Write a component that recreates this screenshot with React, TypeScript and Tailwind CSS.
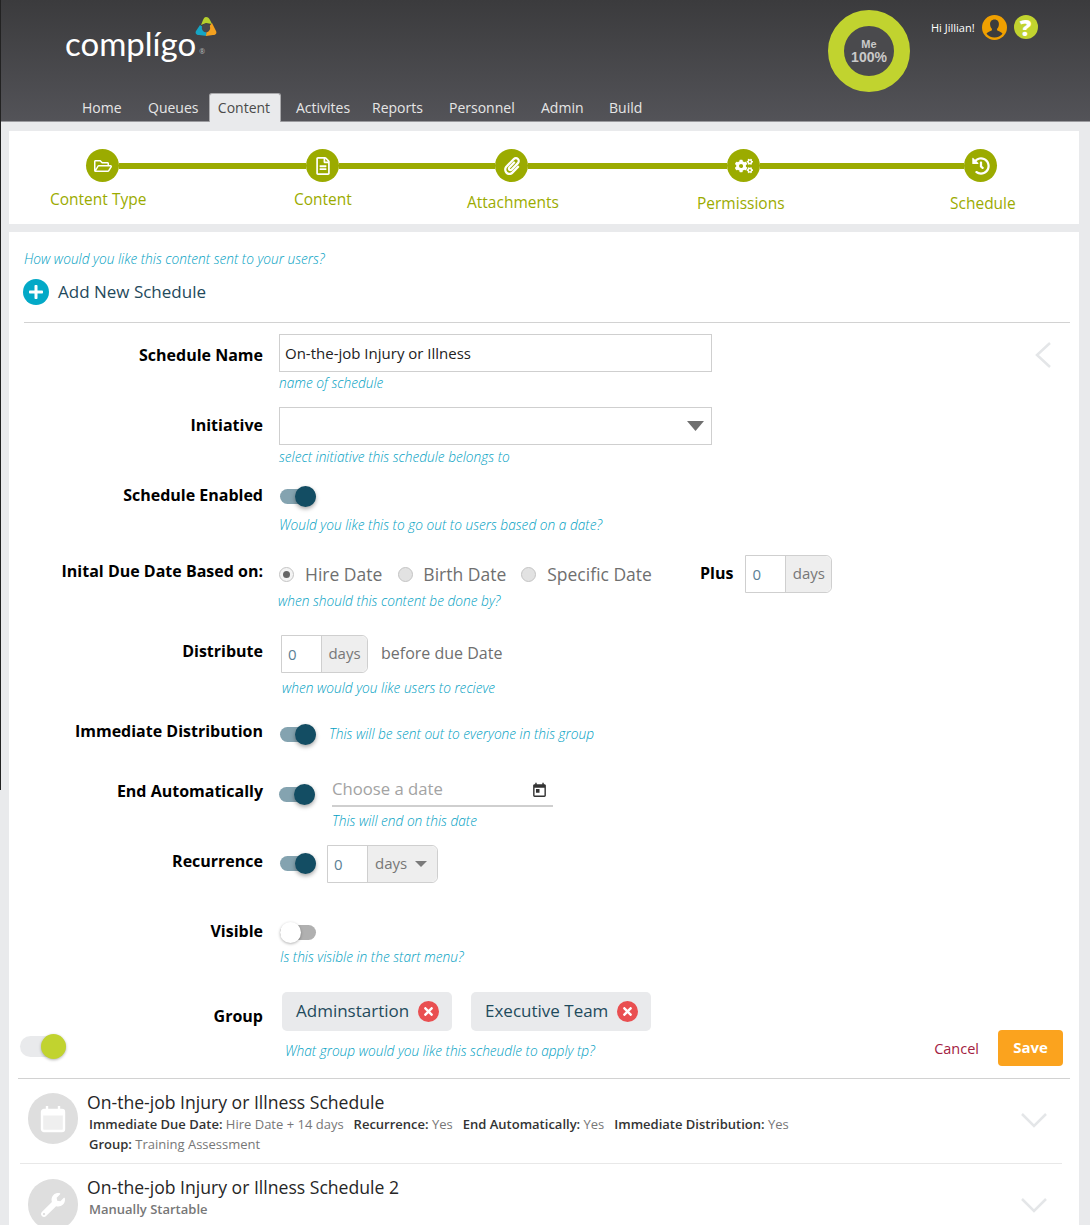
import React from "react";
import { FaRegFolderOpen, FaRegFileAlt, FaPaperclip, FaCogs, FaHistory, FaPlus, FaTimes, FaWrench } from "react-icons/fa";
import { MdToday } from "react-icons/md";

function Hint({ children, className = "" }: { children: React.ReactNode; className?: string }) {
  return <div className={"text-[13.7px] leading-5 italic font-light text-[#00a0c2] whitespace-nowrap " + className}>{children}</div>;
}

function Toggle({ on = true }: { on?: boolean }) {
  return on ? (
    <div className="flex h-[15px] w-9 items-center justify-end rounded-full bg-[#84a3b0]">
      <div className="h-[21px] w-[21px] shrink-0 rounded-full bg-[#134d63] shadow-[0_2px_4px_rgba(0,0,0,0.35)]" />
    </div>
  ) : (
    <div className="flex h-[15px] w-9 items-center justify-start rounded-full bg-[#b0b0b0]">
      <div className="h-[21px] w-[21px] shrink-0 rounded-full bg-white shadow-[0_1px_3px_rgba(0,0,0,0.3)]" />
    </div>
  );
}

function Label({ children, className = "" }: { children: React.ReactNode; className?: string }) {
  return <div className={"text-right text-[16px] leading-[22px] font-bold text-black whitespace-nowrap " + className}>{children}</div>;
}

function Radio({ checked = false }: { checked?: boolean }) {
  return (
    <span className={"flex h-[15px] w-[15px] items-center justify-center rounded-full border border-[#c4c4c4] " + (checked ? "bg-[#f4f4f4]" : "bg-[#e2e2e2]")}>
      {checked && <span className="h-[7px] w-[7px] rounded-full bg-[#666]" />}
    </span>
  );
}

function Days({ className = "" }: { className?: string }) {
  return (
    <div className={"flex h-[38px] w-[87px] rounded-r-[6px] border border-[#cfcfcf] text-[15px] " + className}>
      <div className="flex w-[39px] items-center pl-[6px] text-[#5b7f95]">0</div>
      <div className="flex flex-1 items-center justify-center rounded-r-[6px] border-l border-[#cfcfcf] bg-[#eeeeee] pb-[2px] text-[#777]">days</div>
    </div>
  );
}

function Chip({ text, className = "" }: { text: string; className?: string }) {
  return (
    <div className={"flex h-[39px] items-center rounded-[5px] bg-[#e9eaec] text-[17px] text-[#1f4a5c] " + className}>
      <span className="pb-[2px]">{text}</span>
      <span className="ml-[9px] flex h-[21px] w-[21px] items-center justify-center rounded-full bg-[#e94f51] text-[13px] text-white">
        <FaTimes />
      </span>
    </div>
  );
}

function Step({ icon, className = "" }: { icon: React.ReactNode; className?: string }) {
  return (
    <div className={"flex h-[33px] w-[33px] shrink-0 items-center justify-center rounded-full bg-[#9bab00] text-[18px] text-white " + className}>
      {icon}
    </div>
  );
}

function Bar() {
  return <div className="h-[6px] flex-1 bg-[#9bab00]" />;
}

function Chevron() {
  return (
    <svg width="28" height="16" viewBox="0 0 28 16" fill="none" stroke="#e4e6e8" strokeWidth="2.5">
      <path d="M2 2 L14 14 L26 2" />
    </svg>
  );
}

function Meta({ k, v, className = "" }: { k: string; v: string; className?: string }) {
  return (
    <span className={"whitespace-nowrap " + className}>
      <span className="font-semibold text-[#333]">{k}</span> <span className="text-[#777]">{v}</span>
    </span>
  );
}

export default function App() {
  return (
    <div className="relative h-[1225px] w-[1090px] overflow-hidden bg-[#e9eaec] font-['Open_Sans',sans-serif]">
      <div className="absolute left-0 top-0 h-[790px] w-px bg-[#222]" />
      <header className="flex h-[122px] flex-col border-b border-[#9a9a9e] bg-gradient-to-b from-[#3b3b3d] to-[#535358]">
        <div className="flex h-[93px]">
          <div className="ml-[65px] mt-[17px] flex h-[45px] w-[153px] items-start">
            <div className="mt-[9px] font-['Lato',sans-serif] text-[33px] leading-[34px] font-normal text-white">complígo</div>
            <div className="flex flex-col items-start">
              <svg width="22" height="20" viewBox="0 0 22 20" className="-ml-[1px]">
                <path d="M11 0 C13 0 14 1 15 3 L17 7 L11 6 L6 8 L8 3 C9 1 9.5 0 11 0Z" fill="#b5cf2d" />
                <path d="M5 8 L11 12 L12 19 L4 18 C1 18 0 16 1 14Z" fill="#16a5c4" />
                <path d="M17 6 L21 14 C22 16 21 18 18 18 L11 19 L12 12Z" fill="#f4a11f" />
                <circle cx="11" cy="11" r="4.2" fill="#47474a" />
              </svg>
              <span className="ml-[3px] mt-[11px] text-[7px] leading-[8px] text-[#bbb]">®</span>
            </div>
          </div>
          <div className="ml-[610px] mt-[10px] flex h-[82px] w-[82px] shrink-0 flex-col items-center justify-center rounded-full border-[16px] border-[#c1d32f] bg-[#4a4a4d] font-['Liberation_Sans',sans-serif] font-bold text-[#c9c9c9]">
            <span className="text-[11px] leading-[12px]">Me</span>
            <span className="text-[14px] leading-[14px]">100%</span>
          </div>
          <div className="ml-[21px] mt-[15px] flex h-[26px] items-center">
            <span className="text-[11px] font-['Open_Sans',sans-serif] text-white">Hi Jillian!</span>
            <svg width="25" height="25" viewBox="0 0 25 25" className="ml-[7px] -mt-[2px]">
              <circle cx="12.5" cy="12.5" r="12.5" fill="#f0a000" />
              <path d="M12.5 4.5c-3 0-4.6 2.3-4.4 5 .1 1.7.8 3.3 1.8 4.3.2.9 0 1.6-.7 2-1.600.8-4 1.300-4.700 3 1.700 2.300 4.700 3.700 8 3.700s6.300-1.400 8-3.700c-.7-1.700-3.100-2.200-4.700-3-.7-.4-.9-1.100-.7-2 1-1 1.700-2.600 1.800-4.300.2-2.700-1.400-5-4.400-5z" fill="#3d3d3d" />
            </svg>
            <span className="ml-[7px] -mt-[2px] flex h-6 w-6 items-center justify-center rounded-full bg-[#c1d32f] text-[23px] leading-none font-extrabold text-white">?</span>
          </div>
        </div>
        <nav className="flex h-[28px] items-center text-[14px] text-[#e6e6e6]">
          <span className="ml-[82px] w-[66px]">Home</span>
          <span className="w-[61px]">Queues</span>
          <span className="flex h-[29px] w-[72px] items-center justify-center self-start rounded-t-[3px] border border-b-0 border-[#a9a9ac] bg-[#e9eaec] pb-[2px] pr-[2px] text-[#4a4a4a]">Content</span>
          <span className="ml-[15px] w-[76px]">Activites</span>
          <span className="w-[77px]">Reports</span>
          <span className="w-[92px]">Personnel</span>
          <span className="w-[68px]">Admin</span>
          <span>Build</span>
        </nav>
      </header>

      <section className="ml-[9px] mt-[9px] h-[93px] w-[1070px] bg-white">
        <div className="ml-[77px] flex w-[911px] items-center pt-[18px]">
          <Step icon={<FaRegFolderOpen />} />
          <Bar />
          <Step icon={<FaRegFileAlt />} />
          <div className="h-[6px] w-[156px] bg-[#9bab00]" />
          <Step icon={<FaPaperclip />} />
          <div className="h-[6px] w-[199px] bg-[#9bab00]" />
          <Step icon={<FaCogs />} />
          <div className="h-[6px] w-[204px] bg-[#9bab00]" />
          <Step icon={<FaHistory />} />
        </div>
        <div className="flex text-[15.5px] leading-5 font-medium text-[#9bab00]">
          <span className="ml-[41px] mt-[7px] w-[244px]">Content Type</span>
          <span className="mt-[7px] w-[173px]">Content</span>
          <span className="mt-[10px] w-[230px]">Attachments</span>
          <span className="mt-[11px] w-[253px]">Permissions</span>
          <span className="mt-[11px]">Schedule</span>
        </div>
      </section>

      <main className="ml-[9px] mt-[8px] h-[993px] w-[1070px] overflow-hidden bg-white">
        <Hint className="ml-[15px] pt-[17px]">How would you like this content sent to your users?</Hint>
        <div className="ml-[14px] mt-[10px] flex h-[26px] items-center">
          <span className="flex h-[26px] w-[26px] items-center justify-center rounded-full bg-[#03a9c7] text-[16px] text-white"><FaPlus /></span>
          <span className="ml-[9px] text-[17px] text-[#1f4a5c]">Add New Schedule</span>
        </div>
        <div className="ml-[15px] mt-[17px] h-px w-[1046px] bg-[#d2d2d2]" />

        <div className="mt-[11px] flex h-[73px]">
          <div className="w-[254px]"><Label className="mt-[10px]">Schedule Name</Label></div>
          <div className="ml-4">
            <div className="flex h-[38px] w-[433px] items-center border border-[#cfcfcf] pl-[5px] text-[15px] text-[#222]">On-the-job Injury or Illness</div>
            <Hint className="mt-[1px]">name of schedule</Hint>
          </div>
          <div className="ml-[322px] mt-[8px]">
            <svg width="18" height="26" viewBox="0 0 18 26" fill="none" stroke="#e4e6e8" strokeWidth="2.5"><path d="M16 1 L3 13 L16 25" /></svg>
          </div>
        </div>

        <div className="flex h-[77px]">
          <div className="w-[254px]"><Label className="mt-[7px]">Initiative</Label></div>
          <div className="ml-4">
            <div className="flex h-[38px] w-[433px] items-center justify-end border border-[#cfcfcf] pr-[7px]">
              <svg width="17" height="10" viewBox="0 0 17 10"><path d="M0 0 H17 L8.500 10Z" fill="#6f6f6f" /></svg>
            </div>
            <Hint className="mt-[2px]">select initiative this schedule belongs to</Hint>
          </div>
        </div>

        <div className="flex h-[71px]">
          <div className="w-[254px]"><Label>Schedule Enabled</Label></div>
          <div className="ml-[17px]">
            <div className="mt-[5px]"><Toggle /></div>
            <Hint className="ml-[-1px] mt-[11px]">Would you like this to go out to users based on a date?</Hint>
          </div>
        </div>

        <div className="flex h-[80px]">
          <div className="w-[254px]"><Label className="mt-[5px]">Inital Due Date Based on:</Label></div>
          <div className="ml-[15px] w-[425px]">
            <div className="mt-[8px] flex h-[22px] items-center text-[17.5px] text-[#6f6f6f]">
              <span className="ml-[1px]"><Radio checked /></span>
              <span className="ml-[11px]">Hire Date</span>
              <span className="ml-[16px]"><Radio /></span>
              <span className="ml-[10px]">Birth Date</span>
              <span className="ml-[15px]"><Radio /></span>
              <span className="ml-[11px]">Specific Date</span>
            </div>
            <Hint className="mt-[6px]">when should this content be done by?</Hint>
          </div>
          <Label className="ml-[-3px] mt-[7px]">Plus</Label>
          <Days className="ml-[12px]" />
        </div>

        <div className="flex h-[85px]">
          <div className="w-[254px]"><Label className="mt-[5px]">Distribute</Label></div>
          <div className="ml-[18px]">
            <div className="flex items-center">
              <Days />
              <span className="ml-[13px] pb-[2px] text-[16px] text-[#6f6f6f]">before due Date</span>
            </div>
            <Hint className="ml-[1px] mt-[5px]">when would you like users to recieve</Hint>
          </div>
        </div>

        <div className="flex h-[60px]">
          <div className="w-[254px]"><Label>Immediate Distribution</Label></div>
          <div className="ml-[17px] flex h-[28px] items-center">
            <Toggle />
            <Hint className="ml-[13px]">This will be sent out to everyone in this group</Hint>
          </div>
        </div>

        <div className="flex h-[65px]">
          <div className="w-[254px]"><Label>End Automatically</Label></div>
          <div className="ml-4 mt-[7px]"><Toggle /></div>
          <div className="ml-[17px]">
            <div className="flex h-[27px] w-[221px] items-center justify-between border-b-2 border-[#cfcfcf] pb-[8px] pr-[5px] text-[16.7px] text-[#a3a3a3]">
              <span>Choose a date</span>
              <MdToday className="mt-[4px] text-[#333]" size={17} />
            </div>
            <Hint className="mt-[4px]">This will end on this date</Hint>
          </div>
        </div>

        <div className="flex h-[75px]">
          <div className="w-[254px]"><Label className="mt-[5px]">Recurrence</Label></div>
          <div className="ml-[17px] mt-[11px]"><Toggle /></div>
          <div className="ml-[11px] flex h-[38px] w-[111px] rounded-r-[6px] border border-[#cfcfcf] text-[15px]">
            <div className="flex w-[39px] items-center pl-[6px] text-[#5b7f95]">0</div>
            <div className="flex flex-1 items-center rounded-r-[6px] border-l border-[#cfcfcf] bg-[#eeeeee] pb-[2px] pl-[7px] text-[#777]">
              days
              <svg width="12" height="6" viewBox="0 0 12 6" className="ml-[8px] mt-[2px]"><path d="M0 0 H12 L6 6Z" fill="#7a7a7a" /></svg>
            </div>
          </div>
        </div>

        <div className="flex h-[72px]">
          <div className="w-[254px]"><Label>Visible</Label></div>
          <div className="ml-[17px]">
            <div className="mt-[5px]"><Toggle on={false} /></div>
            <Hint className="mt-[7px]">Is this visible in the start menu?</Hint>
          </div>
        </div>

        <div className="ml-[9px] flex h-[87px] w-[1052px] border-b border-[#d2d2d2]">
          <div className="w-[245px] shrink-0">
            <Label className="mt-[13px]">Group</Label>
            <div className="ml-[2px] mt-[9px] flex h-[21px] w-[46px] items-center justify-end rounded-full bg-[#e9eaec]">
              <div className="h-[25px] w-[25px] shrink-0 rounded-full bg-[#c1d32f] shadow-[0_1px_3px_rgba(0,0,0,0.3)]" />
            </div>
          </div>
          <div className="ml-[19px]">
            <div className="flex">
              <Chip text="Adminstartion" className="w-[170px] pl-[14px]" />
              <Chip text="Executive Team" className="ml-[19px] w-[180px] pl-[14px]" />
            </div>
            <Hint className="ml-[3px] mt-[10px]">What group would you like this scheudle to apply tp?</Hint>
          </div>
          <div className="ml-auto mr-[7px] mt-[38px] flex h-[36px] items-center">
            <span className="pt-[1px] text-[14.5px] text-[#a3213f]">Cancel</span>
            <span className="ml-[19px] flex h-[36px] w-[65px] items-center justify-center rounded-[4px] bg-[#fba31e] pb-[2px] text-[15px] font-bold text-white">Save</span>
          </div>
        </div>

        <div className="ml-[11px] flex h-[85px] w-[1042px] border-b border-[#e8e8e8]">
          <div className="ml-[8px] mt-[14px] flex h-[51px] w-[50px] shrink-0 items-center justify-center rounded-full bg-[#dedede] text-white">
            <svg width="26" height="28" viewBox="0 0 26 28" fill="none" stroke="#fff" strokeWidth="2.400">
              <rect x="2" y="5" width="22" height="21" rx="2" fill="#efefef" />
              <path d="M2 8 H24" strokeWidth="5" />
              <path d="M7 1 V7 M19 1 V7" />
            </svg>
          </div>
          <div className="ml-[9px] mt-[11px]">
            <div className="text-[17.6px] leading-6 font-medium text-[#262626]">On-the-job Injury or Illness Schedule</div>
            <div className="ml-[2px] mt-[1px] flex h-5 items-center text-[13px]">
              <Meta k="Immediate Due Date:" v="Hire Date + 14 days" />
              <Meta k="Recurrence:" v="Yes" className="ml-[10px]" />
              <Meta k="End Automatically:" v="Yes" className="ml-[10px]" />
              <Meta k="Immediate Distribution:" v="Yes" className="ml-[10px]" />
            </div>
            <div className="ml-[2px] flex h-5 items-center text-[13px]">
              <Meta k="Group:" v="Training Assessment" />
            </div>
          </div>
          <div className="ml-auto mr-[14px] mt-[33px]"><Chevron /></div>
        </div>

        <div className="ml-[11px] flex h-[70px] w-[1042px]">
          <div className="ml-[8px] mt-[15px] flex h-[51px] w-[50px] shrink-0 items-center justify-center rounded-full bg-[#dedede] text-[24px] text-white">
            <FaWrench />
          </div>
          <div className="ml-[9px] mt-[11px]">
            <div className="text-[17.6px] leading-6 font-medium text-[#262626]">On-the-job Injury or Illness Schedule 2</div>
            <div className="ml-[2px] text-[13px] leading-5 font-semibold text-[#777]">Manually Startable</div>
          </div>
          <div className="ml-auto mr-[14px] mt-[33px]"><Chevron /></div>
        </div>
      </main>
    </div>
  );
}
